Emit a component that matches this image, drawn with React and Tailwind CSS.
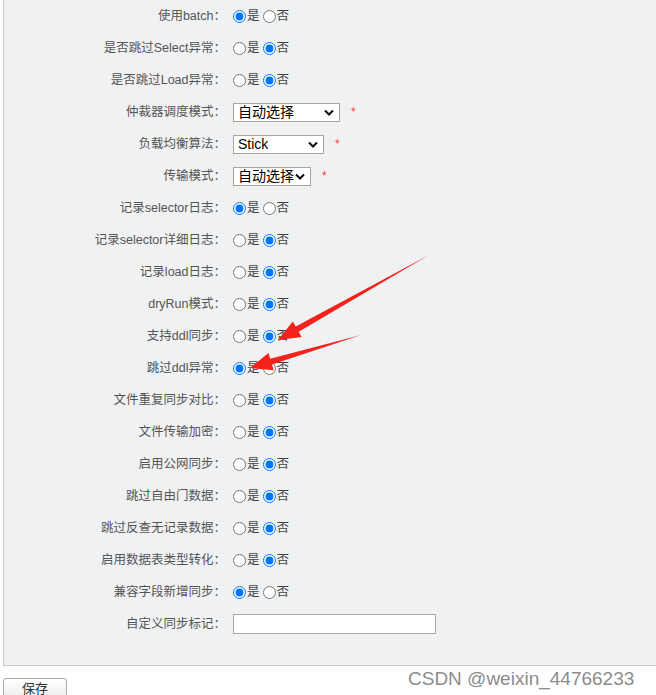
import React from "react";

const font = { fontFamily: '"Liberation Sans", "Noto Sans CJK SC", sans-serif' };

const rows = [
  { label: "使用batch：", type: "radio", value: true },
  { label: "是否跳过Select异常：", type: "radio", value: false },
  { label: "是否跳过Load异常：", type: "radio", value: false },
  { label: "仲裁器调度模式：", type: "select", text: "自动选择", width: "w-[107px]" },
  { label: "负载均衡算法：", type: "select", text: "Stick", width: "w-[91px]" },
  { label: "传输模式：", type: "select", text: "自动选择", width: "w-[78px]" },
  { label: "记录selector日志：", type: "radio", value: true },
  { label: "记录selector详细日志：", type: "radio", value: false },
  { label: "记录load日志：", type: "radio", value: false },
  { label: "dryRun模式：", type: "radio", value: false },
  { label: "支持ddl同步：", type: "radio", value: false },
  { label: "跳过ddl异常：", type: "radio", value: true },
  { label: "文件重复同步对比：", type: "radio", value: false },
  { label: "文件传输加密：", type: "radio", value: false },
  { label: "启用公网同步：", type: "radio", value: false },
  { label: "跳过自由门数据：", type: "radio", value: false },
  { label: "跳过反查无记录数据：", type: "radio", value: false },
  { label: "启用数据表类型转化：", type: "radio", value: false },
  { label: "兼容字段新增同步：", type: "radio", value: true },
  { label: "自定义同步标记：", type: "input" },
];

const Radio = ({ checked, label }) => (
  <label className="flex items-center">
    <input
      type="radio"
      readOnly
      checked={checked}
      className="m-0 w-[13px] h-[13px] accent-[#0075ff]"
    />
    <span className="ml-px text-[12.5px] text-[#444]">{label}</span>
  </label>
);

const Select = ({ text, width }) => (
  <div
    className={`${width} h-[19px] flex items-center justify-between border border-[#a6a6a6] bg-white pl-[4px] pr-[5px] text-[14px] text-black`}
  >
    <span className="leading-none">{text}</span>
    <svg width="10" height="7" viewBox="0 0 10 7">
      <path d="M1 1.5 L5 5.5 L9 1.5" fill="none" stroke="#111" strokeWidth="2" />
    </svg>
  </div>
);

const Row = ({ row }) => (
  <div className="flex items-center h-8">
    <div className="w-[222px] text-right text-[12.5px] text-[#555]">{row.label}</div>
    <div className="pl-[7px] flex items-center">
      {row.type === "radio" && (
        <div className="flex items-center gap-[3px]">
          <Radio checked={row.value} label="是" />
          <Radio checked={!row.value} label="否" />
        </div>
      )}
      {row.type === "select" && (
        <div className="flex items-center">
          <Select text={row.text} width={row.width} />
          <span className="ml-[11px] text-[12px] text-[#ff3b3b]">*</span>
        </div>
      )}
      {row.type === "input" && (
        <div className="w-[203px] h-[20px] border border-[#a9a9a9] bg-white" />
      )}
    </div>
  </div>
);

export default function App() {
  return (
    <div className="relative w-[656px] h-[695px] overflow-hidden bg-white" style={font}>
      <div className="ml-[3px] w-[680px] h-[666px] border-l border-b border-[#c9c9c9] bg-[#f0f1f3]">
        {rows.map((row, i) => (
          <Row key={i} row={row} />
        ))}
      </div>
      <div className="mt-[10px] ml-[3px]">
        <button className="w-[64px] h-[22px] rounded-[3px] border border-[#a8a8a8] bg-gradient-to-b from-white to-[#ececec] text-[13px] text-[#333]">
          保存
        </button>
      </div>

      <div className="absolute left-[408px] top-[665px] text-[19px] text-[#8c8c8c]">
        CSDN @weixin_44766233
      </div>

      <svg className="absolute left-0 top-0 pointer-events-none" width="656" height="695">
        <polygon
          points="429,255 298.7,331.8 301.6,337 278,340 292.8,321.4 295.7,326.6"
          fill="#f5221b"
        />
        <polygon
          points="361,335 272,364.6 273.7,370.3 250,368 268.5,353.1 270.2,358.8"
          fill="#f5221b"
        />
      </svg>
    </div>
  );
}
